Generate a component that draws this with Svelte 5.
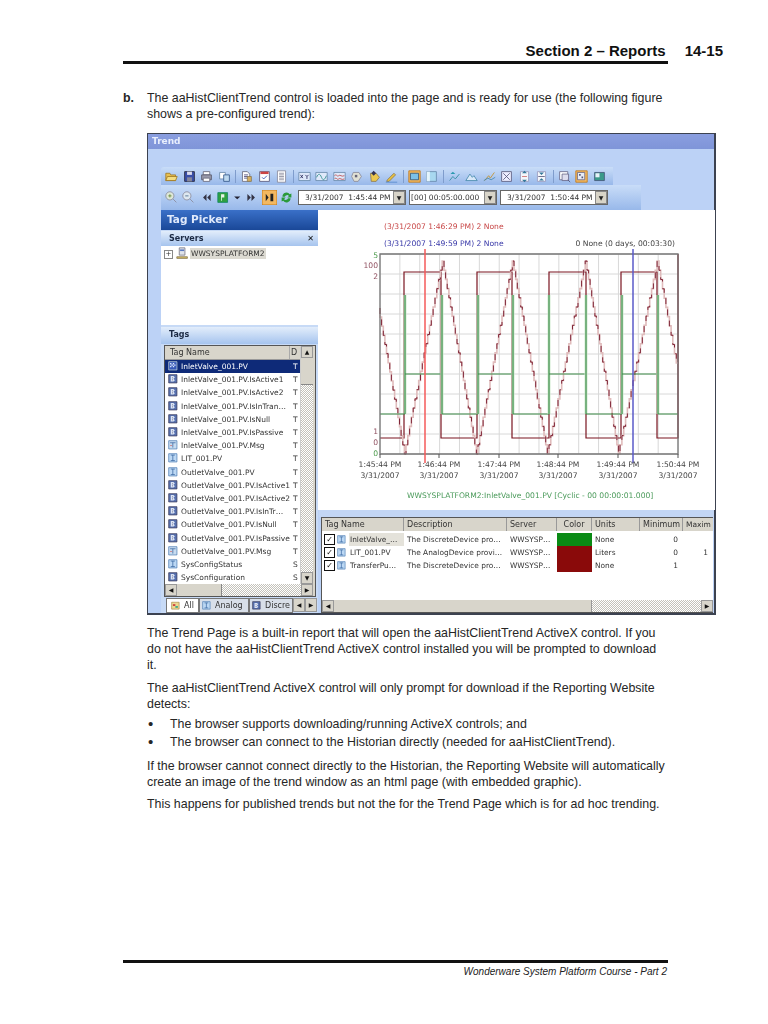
<script>
  const P = {
    folder: [['M1 4h5l1 2h6v7H1z', '#e8c050', '#a07820'], ['M3 8h12l-2 5H1z', '#f4dc80', '#a07820']],
    save: [['M2 2h12v12H2z', '#3a4fa8', '#223'], ['M5 2h6v4H5z', '#dde', 'none'], ['M5 9h6v5H5z', '#889', 'none']],
    print: [['M4 2h8v4H4z', '#fff', '#667'], ['M2 6h12v6H2z', '#99a', '#556'], ['M4 10h8v4H4z', '#fff', '#667']],
    copy: [['M2 3h7v8H2z', '#fff', '#68a'], ['M7 6h7v8H7z', '#bcd8f0', '#358']],
    doc: [['M3 2h6l3 3v9H3z', '#fff', '#667'], ['M5 6h5M5 8h5M5 10h5', 'none', '#447'], ['M9 8h5v6H9z', '#d8b060', '#875']],
    check: [['M2 2h12v12H2z', '#fff', '#557'], ['M3 2h10v3H3z', '#c44', 'none'], ['M5 9l2 2 4-4', 'none', '#24a']],
    lines: [['M3 1h10v14H3z', '#fff', '#889'], ['M5 4h6M5 6h6M5 8h6M5 10h6M5 12h6', 'none', '#889']],
    xy: [['M1 3h14v10H1z', '#dfe9fa', '#68a'], ['M3 6l3 4M6 6l-3 4M9 6l2 2 2-2M11 8v3', 'none', '#225']],
    wave: [['M1 3h14v10H1z', '#dfe9fa', '#68a'], ['M2 9c2-5 4-5 6 0s4 3 6-2', 'none', '#2a8a8a']],
    wave2: [['M1 3h14v10H1z', '#dfe9fa', '#68a'], ['M2 7c2-3 3 2 5 0s3 2 7 0M2 11c2-3 3 2 5 0s3 2 7 0', 'none', '#b44']],
    tag: [['M4 3h7l3 5-4 6H5L2 8z', '#e0e0d4', '#889'], ['M6 6h3v3H6z', '#667', 'none']],
    tag2: [['M3 4h7l4 5-4 5H4z', '#ecc850', '#875'], ['M7 1l3 3-3 3-3-3z', '#335', 'none']],
    pen: [['M3 12l8-8 2 2-8 8H2z', '#e8c040', '#875'], ['M1 15h14', 'none', '#58c']],
    box: [['M1 1h14v14H1z', '#f3b860', '#c07818'], ['M3 4h10v8H3z', '#7cc0e8', '#357']],
    pane: [['M2 2h12v12H2z', '#a8d8f0', '#68a'], ['M2 2h4v12H2z', '#e4f4fc', 'none']],
    up: [['M2 13l4-5 3 3 5-6', 'none', '#2a8a9a'], ['M6 2l3 3H3z', '#2a9ab0', 'none']],
    up2: [['M1 13l5-8 3 4 2-2 4 6z', '#d8e8f8', '#48a']],
    up3: [['M2 13l5-6 2 3 5-7', 'none', '#c89020'], ['M1 13l5-3 4 2 5-3', 'none', '#48a']],
    fit: [['M2 2h12v12H2z', '#eef', '#557'], ['M4 4l8 8M12 4l-8 8', 'none', '#557']],
    vs: [['M3 2h10v12H3z', '#f4f6fb', '#99b'], ['M8 1l3 3H5zM8 15l-3-3h6z', '#379', 'none'], ['M5 8h6', 'none', '#c66']],
    vs2: [['M3 2h10v12H3z', '#f4f6fb', '#99b'], ['M8 6l3-3H5zM8 10l-3 3h6z', '#379', 'none'], ['M4 8h8', 'none', '#557']],
    zoomb: [['M2 2h10v10H2z', '#fff', '#668'], ['M5 5h8v8H5z', '#dde', '#668'], ['M12 12l3 3', 'none', '#557']],
    sel: [['M1 1h14v14H1z', '#f3b860', '#c07818'], ['M3 3h9v9H3z', '#e8ecf4', '#668'], ['M5 5h2v2H5zM8 8h2v2H8z', '#557', 'none']],
    img: [['M2 3h12v10H2z', '#3a9a8a', '#457'], ['M3 4h5v5H3z', '#e8f0f8', 'none']],
    zin: [['M6 1a5 5 0 1 0 .01 0z', '#dde8d8', '#889'], ['M4 6h4M6 4v4', 'none', '#683'], ['M10 10l4 4', 'none', '#889']],
    zout: [['M6 1a5 5 0 1 0 .01 0z', '#dde8f0', '#889'], ['M4 6h4', 'none', '#468'], ['M10 10l4 4', 'none', '#889']],
    rew: [['M8 3L3 8l5 5zM14 3L9 8l5 5z', '#334', 'none']],
    play: [['M1 2h12v12H1z', '#30a040', '#186'], ['M5 4h4v4H6v4H5z', '#e8f4e8', 'none']],
    drop: [['M2 6h11l-5.5 5z', '#223', 'none']],
    ff: [['M2 3l5 5-5 5zM8 3l5 5-5 5z', '#334', 'none']],
    pause: [['M0 0h16v16H0z', '#f3b860', '#c07818'], ['M4 4l3 4-3 4zM9 4h3v8H9z', '#222', 'none']],
    sync: [['M3 7a5 5 0 0 1 9-3l2-1v5h-5l2-2a3 3 0 0 0-5 1z', '#2a9a3a', 'none'], ['M13 9a5 5 0 0 1-9 3l-2 1V8h5l-2 2a3 3 0 0 0 5-1z', '#2a9a3a', 'none']],
    dis: [['M1 1h12v12H1z', '#5872b0', '#335'], ['M4 3h4l2 2-2 2 2 2-2 2H4z', '#dbe4f4', 'none'], ['M6 5h1v1H6zM6 8h1v1H6z', '#335', 'none']],
    ana: [['M1 1h12v12H1z', '#bcd8f4', '#4878b0'], ['M4 3h6M7 3v8M4 11h6', 'none', '#2c5a98']],
    str: [['M1 1h12v12H1z', '#c8dcf0', '#4878b0'], ['M3 4h8M7 4v7', 'none', '#2c5a98'], ['M3 8h3', 'none', '#c66']],
    sel0: [['M1 1h12v12H1z', '#3558b8', '#cdd'], ['M3 3h2v2H3zM7 3h2v2H7zM5 5h2v2H5zM9 5h2v2H9zM3 7h2v2H3zM7 7h2v2H7z', '#dde8fc', 'none']],
    all: [['M1 2h12v11H1z', '#eed890', '#a08040'], ['M3 5h4v3H3z', '#c44', 'none'], ['M7 8h4v3H7z', '#4a8', 'none']],
    server: [['M4 1h7v9H4z', '#dfe3ea', '#778'], ['M5 3h5v2H5z', '#5a78c0', 'none'], ['M1 12h13v2H1z', '#d8c060', '#875']]
  };

  const row1 = ['folder','save','print','copy',0,'doc','check','lines',0,'xy','wave','wave2','tag','tag2','pen',0,'box','pane',0,'up','up2','up3','fit','vs','vs2',0,'zoomb','sel','img'];
  const tags = [
    ['InletValve_001.PV','sel0','T'],['InletValve_001.PV.IsActive1','dis','T'],['InletValve_001.PV.IsActive2','dis','T'],
    ['InletValve_001.PV.IsInTran…','dis','T'],['InletValve_001.PV.IsNull','dis','T'],['InletValve_001.PV.IsPassive','dis','T'],
    ['InletValve_001.PV.Msg','str','T'],['LIT_001.PV','ana','T'],['OutletValve_001.PV','ana','T'],
    ['OutletValve_001.PV.IsActive1','dis','T'],['OutletValve_001.PV.IsActive2','dis','T'],['OutletValve_001.PV.IsInTr…','dis','T'],
    ['OutletValve_001.PV.IsNull','dis','T'],['OutletValve_001.PV.IsPassive','dis','T'],['OutletValve_001.PV.Msg','str','T'],
    ['SysConfigStatus','ana','S'],['SysConfiguration','dis','S']
  ];
  const cols = ['Tag Name','Description','Server','Color','Units','Minimum','Maxim'];
  const grid = [
    ['InletValve_…','The DiscreteDevice pro…','WWSYSP…','#0a8a14','None','0','',true],
    ['LIT_001.PV','The AnalogDevice provi…','WWSYSP…','#8a0a0a','Liters','0','1',false],
    ['TransferPu…','The DiscreteDevice pro…','WWSYSP…','#8a0a0a','None','1','',false]
  ];

  // chart data, in page coordinates (the svg viewBox is the panel's own position)
  const vgrid = Array.from({ length: 16 }, (_, i) => 380 + i * 19.87);
  const hgrid = Array.from({ length: 11 }, (_, i) => 254 + i * 20);
  const tri = [[380,308],[406,454],[444,261],[478,454],[514,261],[549,454],[587,261],[620,454],[659,261],[678,363]];
  function stair() {
    let out = `M${tri[0][0]} ${tri[0][1]}`;
    for (let i = 1; i < tri.length; i++) {
      const [a, b] = tri[i - 1], [c, d] = tri[i];
      const n = Math.max(2, Math.round(Math.abs(d - b) / 9));
      for (let k = 1; k <= n; k++) {
        const x = a + (c - a) * k / n, y = b + (d - b) * k / n;
        out += `V${y.toFixed(1)}H${x.toFixed(1)}`;
      }
    }
    return out;
  }
  const triPath = stair();
  const edges = [405, 442, 478, 513, 549, 586, 622, 658];
  const pulse = `M380 438H404V272H441V438H477V272H512V438H549V272H586V438H621V272H657V438H678V254`;
  const times = [['1:45:44 PM',380],['1:46:44 PM',439],['1:47:44 PM',499],['1:48:44 PM',558],['1:49:44 PM',618],['1:50:44 PM',678]];
  const para1 = 'The aaHistClientTrend control is loaded into the page and is ready for use (the following figure shows a pre-configured trend):';
</script>

{#snippet icon(name, size = 13)}
  <svg class="ic" width={size} height={size} viewBox="0 0 16 16" aria-hidden="true">
    {#each P[name] as [d, fill, stroke]}
      <path {d} {fill} {stroke} stroke-width="1" />
    {/each}
  </svg>
{/snippet}

{#snippet combo(text, w, tight = false)}
  <div class="combo" class:tight style="width:{w}px"><span>{text}</span><b>▼</b></div>
{/snippet}

<div class="page">
  <header class="head">
    <span>Section 2 – Reports</span><span class="num">14-15</span>
  </header>

  <div class="lead"><b>b.</b><p>{para1}</p></div>

  <figure class="win">
    <div class="title">Trend</div>
    <div class="tools">
      <div class="tb one">
        {#each row1 as n}
          {#if n}<span class="slot">{@render icon(n)}</span>{:else}<i class="sep"></i>{/if}
        {/each}
      </div>
      <div class="tb two">
        <span class="slot s">{@render icon('zin')}</span>
        <span class="slot s">{@render icon('zout')}</span>
        <span class="slot s">{@render icon('rew', 11)}</span>
        <span class="slot s">{@render icon('play')}</span>
        <span class="slot n">{@render icon('drop', 9)}</span>
        <span class="slot s">{@render icon('ff', 11)}</span>
        <span class="slot s">{@render icon('pause', 15)}</span>
        <span class="slot s">{@render icon('sync')}</span>
        {@render combo('3/31/2007  1:45:44 PM', 108)}
        {@render combo('[00] 00:05:00.000', 88, true)}
        {@render combo('3/31/2007  1:50:44 PM', 108)}
      </div>
    </div>

    <div class="body">
      <aside class="left">
        <div class="picker">Tag Picker</div>
        <div class="sub"><span>Servers</span><span class="x">✕</span></div>
        <div class="tree">
          <span class="plus">+</span>
          {@render icon('server', 13)}
          <span class="node">WWSYSPLATFORM2</span>
        </div>
        <div class="sub tagshd">Tags</div>
        <div class="frame">
          <div class="listwrap">
            <div class="list">
              <div class="lhead"><span>Tag Name</span><span class="d">D</span></div>
              {#each tags as [name, ic, t], i}
                <div class="lrow" class:on={i === 0}>
                  {@render icon(ic, 11)}
                  <span class="nm">{name}</span>
                  <span class="t">{t}</span>
                </div>
              {/each}
            </div>
            <div class="vbar">
              <span class="btn">▲</span>
              <span class="thumb"></span>
              <span class="track"></span>
              <span class="btn">▼</span>
            </div>
          </div>
          <div class="hbar">
            <span class="btn">◀</span><span class="hthumb"></span><span class="track"></span><span class="btn">▶</span>
          </div>
        </div>
        <div class="tabs">
          <span class="tab act">{@render icon('all', 10)} All</span>
          <span class="tab ana">{@render icon('ana', 10)} Analog</span>
          <span class="tab cut">{@render icon('dis', 10)} Discre</span>
          <span class="btn nav">◀</span><span class="btn nav">▶</span>
        </div>
      </aside>

      <section class="right">
        <svg class="chart" width="397" height="300" viewBox="318 210 397 300" font-family="'DejaVu Sans', sans-serif" font-size="7.6">
          {#each vgrid as x}<line x1={x} x2={x} y1="254" y2="454" stroke="#d8d8d8" />{/each}
          {#each hgrid as y}<line x1="380" x2="678" y1={y} y2={y} stroke="#d8d8d8" />{/each}

          <path d={pulse} fill="none" stroke="#7a1420" stroke-width="1.2" />
          <path d={triPath} fill="none" stroke="#e0bcbc" stroke-width="1.6" />
          <path d={triPath} fill="none" stroke="#741428" stroke-width="0.9" stroke-dasharray="6 7" />

          {#each edges as x, i}
            <line x1={x} x2={x} y1="295" y2="414" stroke="#cfeacf" stroke-width="3" />
            <line x1={x} x2={x} y1="295" y2="414" stroke="#3c8c48" stroke-width="1.2" />
            {#if i % 2 === 0}
              <line x1={x} x2={edges[i + 1]} y1="374" y2="374" stroke="#3c8c48" />
            {:else}
              <line x1={x} x2={edges[i + 1] ?? 678} y1="414" y2="414" stroke="#3c8c48" />
            {/if}
          {/each}
          <line x1="380" x2="405" y1="414" y2="414" stroke="#3c8c48" />

          <path d="M380 254H678V454H380z" fill="none" stroke="#777" stroke-width="1.3" />
          {#each times as [, x]}<line x1={x} x2={x} y1="454" y2="458" stroke="#555" />{/each}

          <line x1="425" x2="425" y1="249" y2="463" stroke="#f45a5a" stroke-width="1.5" />
          <line x1="633" x2="633" y1="249" y2="463" stroke="#5a5ac8" stroke-width="1.5" />

          <text x="384" y="229" fill="#c84848">(3/31/2007 1:46:29 PM) 2 None</text>
          <text x="384" y="246" fill="#3838a8">(3/31/2007 1:49:59 PM) 2 None</text>
          <text x="675" y="246" text-anchor="end" fill="#444">0 None (0 days, 00:03:30)</text>

          <text x="378" y="258" text-anchor="end" fill="#4a9a4a">5</text>
          <text x="378" y="268" text-anchor="end" fill="#905060">100</text>
          <text x="378" y="279" text-anchor="end" fill="#905060">2</text>
          <text x="378" y="434" text-anchor="end" fill="#905060">1</text>
          <text x="378" y="445" text-anchor="end" fill="#905060">0</text>
          <text x="378" y="456" text-anchor="end" fill="#4a9a4a">0</text>

          {#each times as [label, x]}
            <text {x} y="467" text-anchor="middle" fill="#444">{label}</text>
            <text {x} y="478" text-anchor="middle" fill="#444">3/31/2007</text>
          {/each}
          <text x="407" y="498" fill="#4a9a5a">WWSYSPLATFORM2:InletValve_001.PV [Cyclic - 00 00:00:01.000]</text>
        </svg>

        <div class="split"></div>

        <div class="gridwrap">
          <div class="ghead">
            {#each cols as c, i}<span class:rt={i === 5} class:ct={i === 3}>{c}</span>{/each}
          </div>
          <div class="gbody">
            {#each grid as [n, desc, srv, col, unit, min, max, on]}
              <div class="grow">
                <span class="gname">
                  <i class="cb">✓</i>{@render icon('ana', 10)}<em class:sel={on}>{n}</em>
                </span>
                <span>{desc}</span>
                <span>{srv}</span>
                <span class="sw" style="background:{col}"></span>
                <span>{unit}</span>
                <span class="rt">{min}</span>
                <span class="rt">{max}</span>
              </div>
            {/each}
          </div>
          <div class="hbar g">
            <span class="btn">◀</span><span class="gthumb"></span><span class="track"></span><span class="btn">▶</span>
          </div>
        </div>
      </section>
    </div>
  </figure>

  <div class="text">
    <p class="p1">The Trend Page is a built-in report that will open the aaHistClientTrend ActiveX control. If you do not have the aaHistClientTrend ActiveX control installed you will be prompted to download it.</p>
    <p class="p2">The aaHistClientTrend ActiveX control will only prompt for download if the Reporting Website detects:</p>
    <ul>
      <li>The browser supports downloading/running ActiveX controls; and</li>
      <li>The browser can connect to the Historian directly (needed for aaHistClientTrend).</li>
    </ul>
    <p class="p3">If the browser cannot connect directly to the Historian, the Reporting Website will automatically create an image of the trend window as an html page (with embedded graphic).</p>
    <p>This happens for published trends but not the for the Trend Page which is for ad hoc trending.</p>
  </div>

  <footer class="foot">Wonderware System Platform Course - Part 2</footer>
</div>

<style>
  :global(body) { margin: 0; background: #fff; }
  .page {
    box-sizing: border-box; width: 768px; height: 1024px; padding: 42px 100px 0 123px;
    display: flex; flex-direction: column;
    font: 12.4px/16px "Liberation Sans", sans-serif; color: #262626;
  }
  .head {
    display: flex; justify-content: flex-end; gap: 19px; font-weight: 700; font-size: 15px; line-height: 17px;
    padding-bottom: 2px; border-bottom: 3px solid #111; color: #111;
  }
  .num { margin: 0 -55px 0 0; }
  .lead { display: flex; margin-top: 26px; }
  .lead b { width: 24px; flex: none; }
  .lead p { margin: 0; width: 519px; }

  .win {
    box-sizing: border-box; margin: 11px 0 0 24px; width: 569px; height: 482px; flex: none;
    border: 1px solid #3c4250; border-width: 1px 2px 2px 1px; background: #bcd2f6;
    display: flex; flex-direction: column; filter: blur(.45px);
    font: 8px/13px "DejaVu Sans", sans-serif; color: #333;
  }
  .title {
    height: 15px; line-height: 15px; padding-left: 4px; flex: none; color: #e8eefc; font-weight: 700; font-size: 9px;
    background: linear-gradient(#8a9ee0, #7f95d8);
  }
  .tools { margin: 18px 0 0 13px; flex: none; }
  .tb { display: flex; align-items: center; background: linear-gradient(#c9ddf8, #98b8ea); }
  .one { width: 452px; height: 18px; padding-left: 2px; box-sizing: border-box; border-radius: 3px 0 0 0; }
  .two { width: 480px; height: 25px; padding-left: 2px; box-sizing: border-box; }
  .slot { width: 17.5px; height: 16px; flex: none; display: flex; align-items: center; justify-content: center; }
  .slot.s { width: 17.3px; }
  .slot.n { width: 11px; }
  .sep { width: 1px; height: 13px; margin: 0 2px; background: #7f9ccc; flex: none; }
  .ic { display: block; flex: none; }
  .combo {
    height: 15px; margin-left: 3px; flex: none; box-sizing: border-box; background: #fff;
    border: 1px solid #666; display: flex; align-items: center; justify-content: space-between;
    white-space: pre; padding-left: 6px; font-size: 7.5px; color: #333;
  }
  .combo.tight { padding-left: 1px; }
  .combo b { width: 12px; height: 13px; background: #d8d4c8; border: 1px solid #888; box-sizing: border-box; text-align: center; font-size: 6px; line-height: 11px; flex: none; color: #222; }

  .body { flex: 1; min-height: 0; display: flex; margin-left: 13px; }
  .left { width: 157px; flex: none; display: flex; flex-direction: column; background: #c7daf6; }
  .picker {
    height: 20px; padding-left: 6px; color: #dfe9fb; font: 700 10.5px/19px "DejaVu Sans", sans-serif;
    background: linear-gradient(#3a70c8, #1a4898); flex: none;
  }
  .sub {
    height: 15px; line-height: 15px; margin-top: 1px; padding: 0 4px 0 8px; flex: none; display: flex; justify-content: space-between;
    font-weight: 700; font-size: 8px; color: #1c2a44; background: linear-gradient(#e2edfb, #a6c4ee);
  }
  .x { font-size: 8px; color: #111; }
  .tree { height: 79px; flex: none; background: #fff; display: flex; align-items: flex-start; padding: 1px 0 0 3px; gap: 1px; box-sizing: border-box; }
  .plus { width: 7px; height: 7px; margin: 3px 2px 0 0; border: 1px solid #888; font-size: 7px; line-height: 6px; text-align: center; }
  .node { background: #dcdad2; padding: 0 1px; line-height: 11px; margin-top: 1px; font-size: 7.5px; }
  .tagshd { margin-top: 2px; height: 17px; line-height: 15px; }
  .frame { margin: 1px 2px 0 3px; border: 1px solid #555; height: 252px; flex: none; box-sizing: border-box; background: #d8d5cb; display: flex; flex-direction: column; padding-right: 2px; }
  .listwrap { flex: 1; min-height: 0; display: flex; background: #fff; }
  .list { flex: 1; min-width: 0; overflow: hidden; }
  .lhead { height: 14px; line-height: 13px; display: flex; justify-content: space-between; background: #d8d5cb; border-bottom: 1px solid #999; padding: 0 1px 0 5px; box-sizing: border-box; }
  .d { width: 8px; border-left: 1px solid #aaa; padding-left: 1px; }
  .lrow { height: 13.2px; display: flex; align-items: center; padding-left: 3px; gap: 2px; white-space: nowrap; font-size: 7.5px; }
  .lrow.on { background: #0e2a78; color: #fff; }
  .nm { flex: 1; min-width: 0; }
  .t { width: 7px; flex: none; }
  .vbar { width: 13px; flex: none; display: flex; flex-direction: column; border-left: 1px solid #ccc; box-sizing: border-box; }
  .btn { display: block; width: 12px; height: 12px; flex: none; background: #d8d5cb; border: 1px solid #999; box-sizing: border-box; text-align: center; font-size: 6px; line-height: 10px; color: #111; }
  .thumb { height: 26px; flex: none; background: #d8d5cb; border-bottom: 1px solid #888; }
  .track { flex: 1; min-width: 0; background: repeating-conic-gradient(#c4c2ba 0 25%, #fff 0 50%) 0 0 / 2px 2px; }
  .hbar { height: 12px; flex: none; display: flex; background: #d8d5cb; }
  .hthumb { width: 44px; flex: none; background: #d8d5cb; border-right: 1px solid #888; }
  .tabs { display: flex; align-items: stretch; height: 15px; margin: 1px 2px 0 5px; flex: none; }
  .tab { display: flex; align-items: center; gap: 3px; padding: 0 2px; background: #d8dfe9; border: 1px solid #777; flex: none; box-sizing: border-box; white-space: nowrap; }
  .tab.act { background: #fff; width: 33px; padding-left: 4px; }
  .tab.ana { width: 50px; }
  .tab.cut { width: 44px; }
  .nav { height: 14px; width: 12px; line-height: 12px; }

  .right { flex: 1; min-width: 0; display: flex; flex-direction: column; padding-left: 1px; }
  .chart { display: block; flex: none; background: #fff; margin-left: -1px; }
  .split { height: 7px; flex: none; background: #c3d6f4; }
  .gridwrap { margin: 0 1px 0 2px; flex: 1; min-height: 0; background: #fff; border: 1px solid #555; border-width: 1px 0 1px 1px; display: flex; flex-direction: column; }
  .ghead, .grow { display: grid; grid-template-columns: 82px 103px 50px 35px 48px 43px 1fr; }
  .ghead { height: 13px; background: #d8d5cb; line-height: 13px; flex: none; }
  .ghead span { padding: 0 3px; border-right: 1px solid #999; white-space: nowrap; }
  .ghead span:last-child { border-right: 0; font-size: 7.5px; }
  .gbody { flex: 1; padding-top: 2px; }
  .grow { height: 13px; line-height: 13px; font-size: 7.4px; }
  .grow > span { padding: 0 3px; white-space: nowrap; }
  .ct { text-align: center; }
  .rt { text-align: right; padding-right: 5px !important; }
  .grow .sw { padding: 0; }
  .gname { display: flex; align-items: center; gap: 2px; padding: 0 0 0 2px !important; }
  .cb { width: 9px; height: 9px; border: 1px solid #111; font-style: normal; font-size: 8px; line-height: 9px; text-align: center; flex: none; color: #111; font-weight: 700; }
  .gname em { font-style: normal; padding: 0 1px; flex: 1; }
  .gname em.sel { background: #e4e2da; }
  .gthumb { width: 257px; flex: none; background: #d8d5cb; border-right: 1px solid #999; }

  .text { margin: 10px 0 0 24px; width: 519px; }
  .text p { margin: 0; }
  .text .p1 { margin-bottom: 7px; }
  .text .p2 { margin-bottom: 4px; }
  .text .p3 { margin-bottom: 6px; }
  .text ul { margin: 0 0 8px; padding: 0; list-style: none; }
  .text li { margin-bottom: 2px; display: flex; }
  .text li::before { content: "•"; width: 23px; flex: none; padding-left: 1px; box-sizing: border-box; font-size: 15px; }
  .foot {
    margin-top: auto; margin-bottom: 46px; border-top: 3px solid #111; text-align: right; padding: 2px 1px 0 0;
    font-style: italic; font-size: 10px; line-height: 13px; color: #222;
  }
</style>
